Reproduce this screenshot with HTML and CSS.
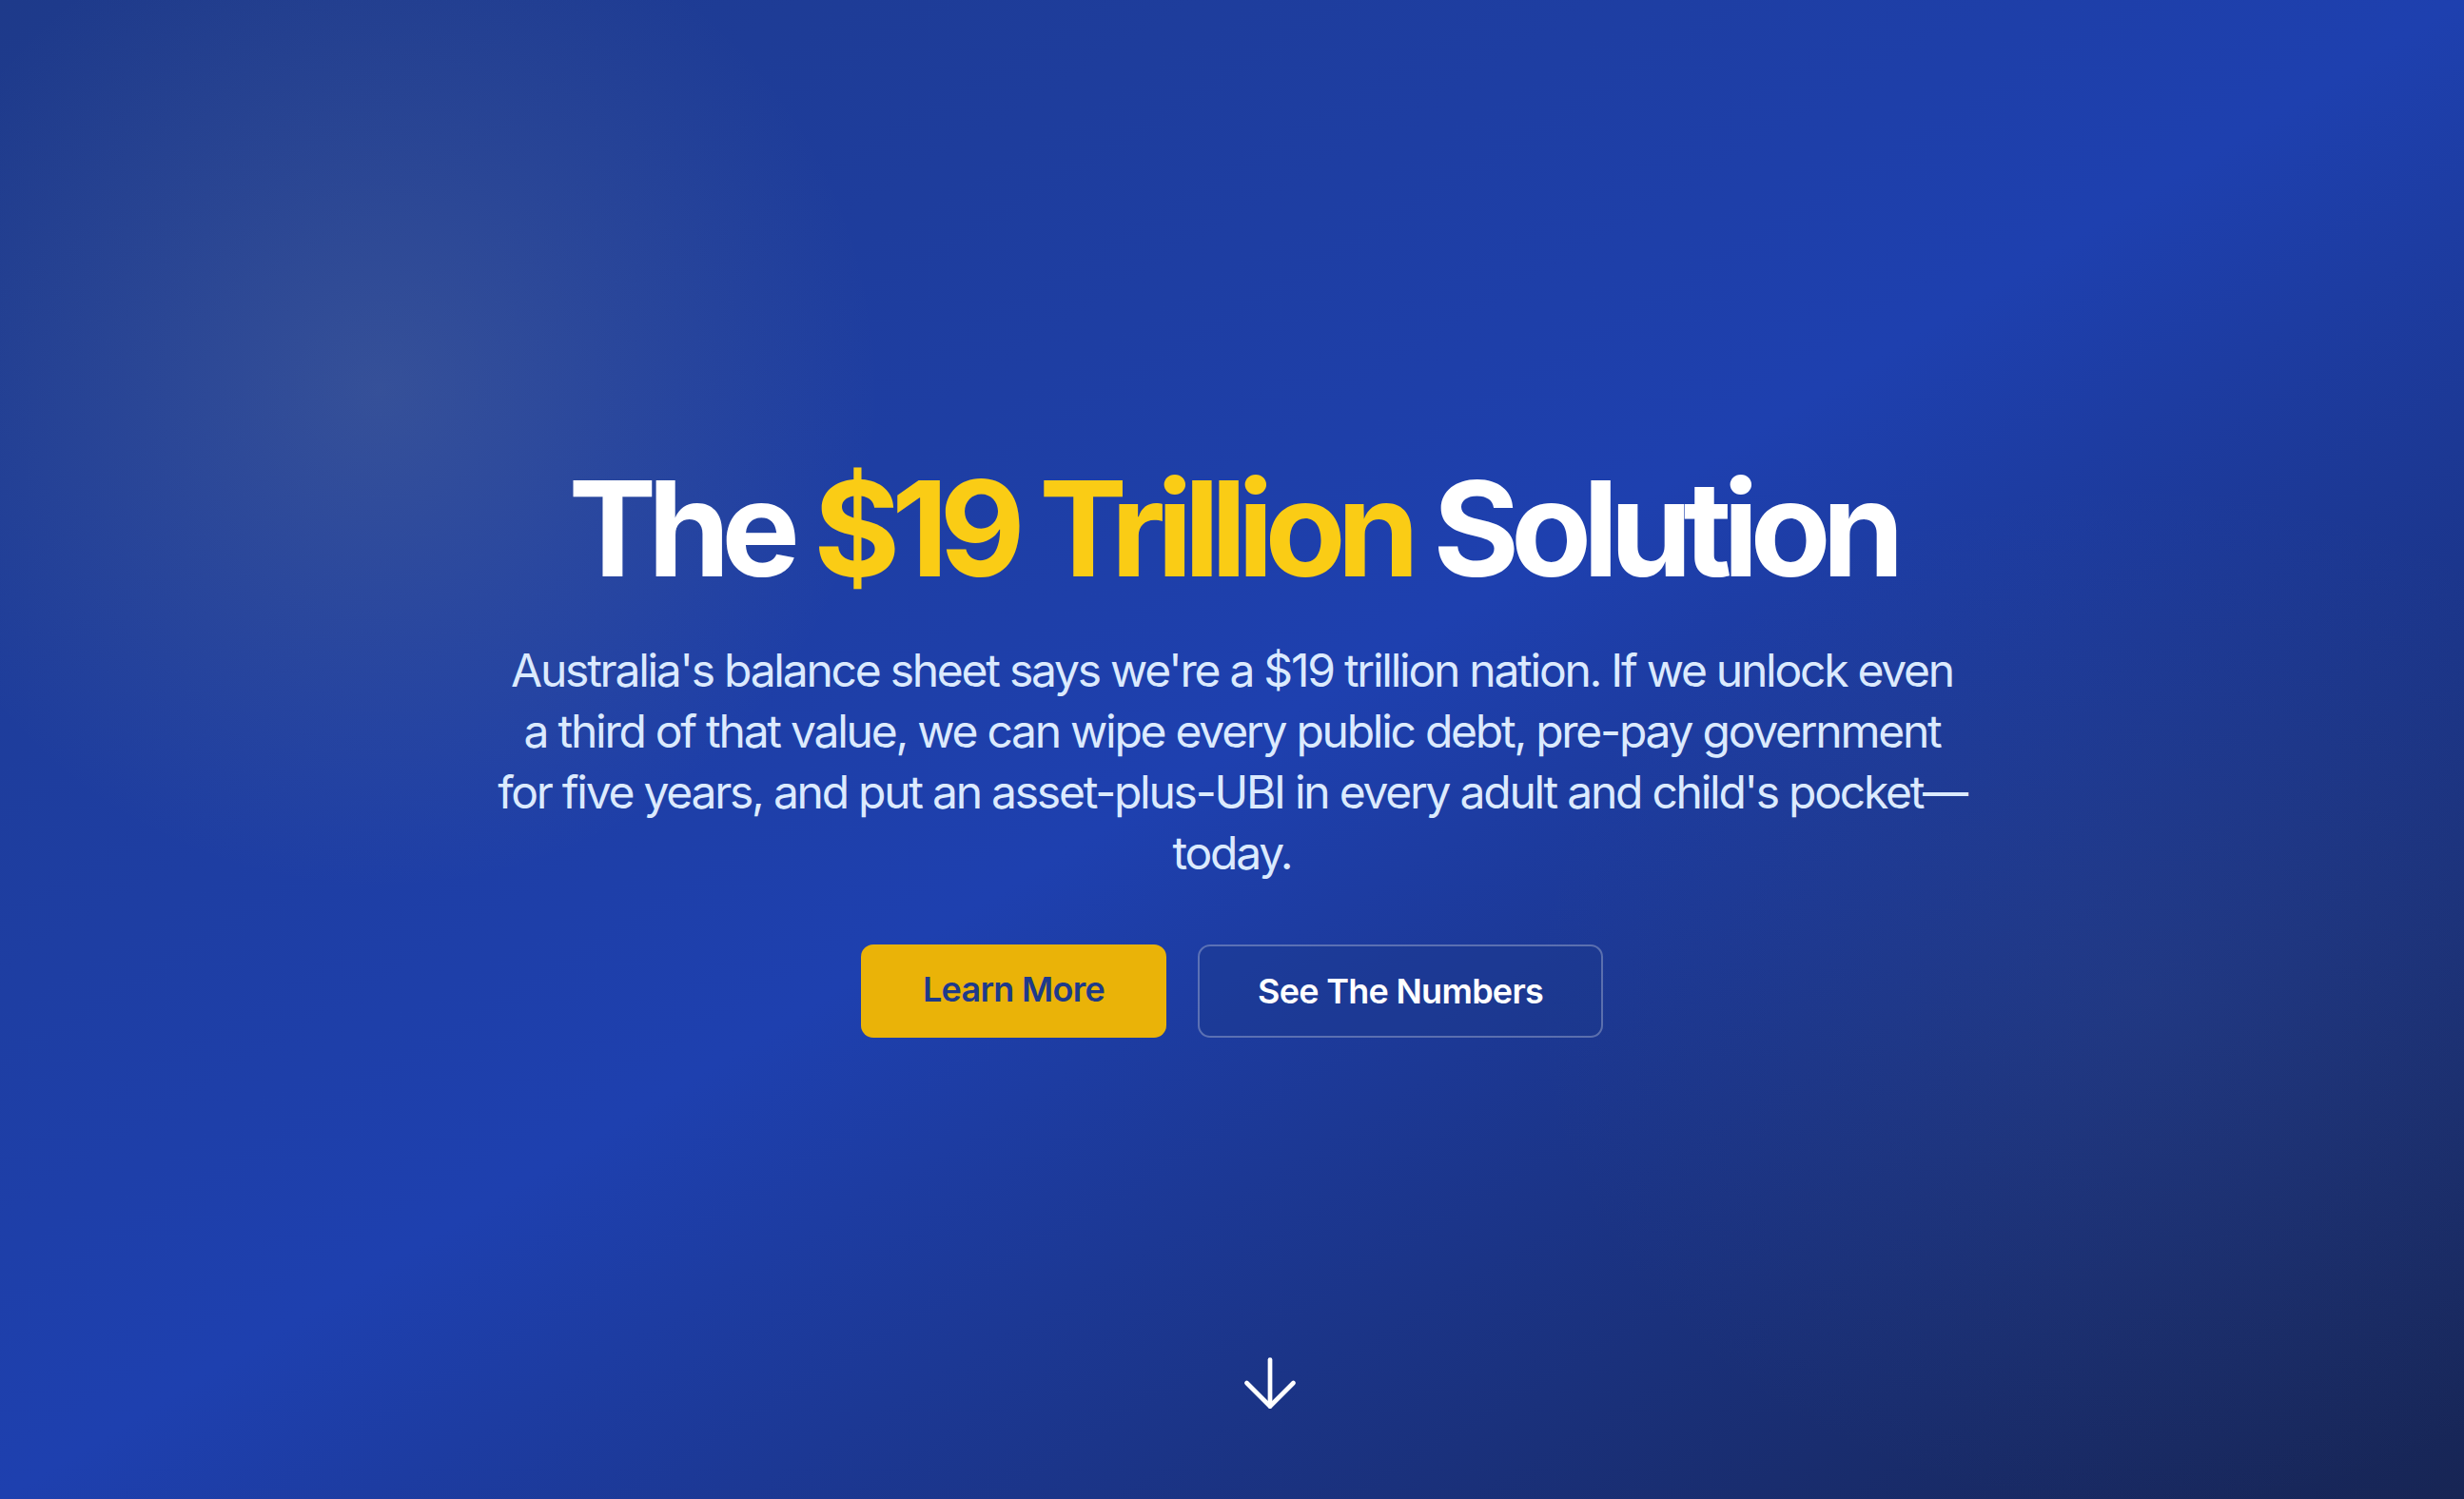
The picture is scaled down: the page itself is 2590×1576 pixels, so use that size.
FILE: index.html
```html
<!DOCTYPE html>
<html lang="en">
<head>
<meta charset="utf-8">
<title>The $19 Trillion Solution</title>
<link rel="stylesheet" href="styles.css">
</head>
<body>
<section class="hero">
  <div class="glow glow-a"></div>
  <div class="glow glow-b"></div>
  <div class="hero-content">
    <h1 class="hero-title">The <span class="accent">$19 Trillion</span> Solution</h1>
    <p class="hero-text">Australia's balance sheet says we're a $19 trillion nation. If we unlock even a&nbsp;third of that value, we can wipe every public debt, pre-pay government for&nbsp;five years, and put an asset-plus-UBI in every adult and child's pocket—today.</p>
    <div class="hero-actions">
      <a class="btn btn-primary" href="#learn">Learn More</a>
      <a class="btn btn-outline" href="#numbers">See The Numbers</a>
    </div>
  </div>
  <a class="scroll-down" href="#learn" aria-label="Scroll down">
    <svg viewBox="0 0 24 24" fill="none" stroke="currentColor" stroke-width="1.35" stroke-linecap="round" stroke-linejoin="round"><path d="M12 5v14"/><path d="M19 12l-7 7-7-7"/></svg>
  </a>
</section>
</body>
</html>
```

FILE: styles.css
```css
* { box-sizing: border-box; }
html, body { margin: 0; padding: 0; }
body {
  font-family: Inter, "Noto Sans", "Liberation Sans", sans-serif;
  color: #fff;
}
.hero {
  position: relative;
  min-height: 100vh;
  display: flex;
  align-items: center;
  justify-content: center;
  overflow: hidden;
  background: linear-gradient(to bottom right, #1e3a8a 0%, #1e40af 50%, #172554 100%);
}
.glow {
  position: absolute;
  border-radius: 50%;
  pointer-events: none;
}
.glow-a {
  left: -200px;
  top: -190px;
  width: 1200px;
  height: 1200px;
  background: radial-gradient(circle, rgba(160, 170, 150, 0.18) 0%, rgba(160, 170, 150, 0.09) 30%, rgba(160, 170, 150, 0) 62%);
}
.glow-b {
  left: 1600px;
  top: 500px;
  width: 1300px;
  height: 1100px;
  background: radial-gradient(closest-side, rgba(120, 150, 200, 0.07) 0%, rgba(120, 150, 200, 0) 100%);
}
.hero-content {
  position: relative;
  text-align: center;
  display: flex;
  flex-direction: column;
  align-items: center;
}
.hero-title {
  margin: 0;
  font-size: 139px;
  line-height: 1;
  font-weight: 700;
  letter-spacing: -0.067em;
  color: #fff;
}
.accent { color: #facc15; }
.hero-text {
  margin: 48px 0 0;
  max-width: 1560px;
  font-size: 48px;
  line-height: 64px;
  letter-spacing: -0.047em;
  color: #dbeafe;
  font-weight: 400;
}
.hero-actions {
  margin-top: 64px;
  display: flex;
  gap: 33px;
  justify-content: center;
}
.btn {
  display: inline-block;
  font-size: 36px;
  line-height: 40px;
  font-weight: 600;
  letter-spacing: -0.02em;
  text-decoration: none;
  border-radius: 13px;
}
.btn-primary {
  background: #eab308;
  color: #1e3a8a;
  padding: 27px 65px 28px;
}
.btn-outline {
  color: #fff;
  border: 2px solid rgba(255, 255, 255, 0.28);
  background: rgba(30, 58, 138, 0.35);
  padding: 27px 61px 27px;
}
.scroll-down {
  position: absolute;
  left: calc(50% - 2px);
  bottom: 80px;
  width: 84px;
  height: 84px;
  color: #fff;
}
.scroll-down svg { width: 84px; height: 84px; display: block; }
```
